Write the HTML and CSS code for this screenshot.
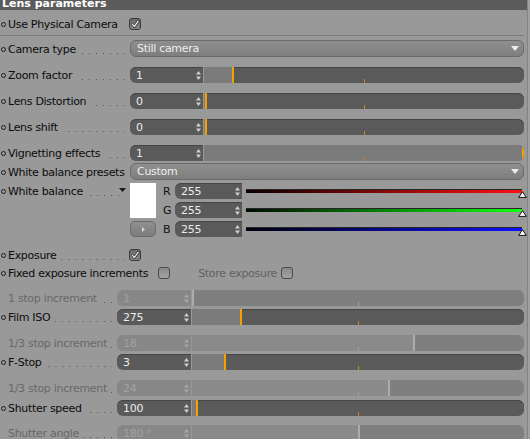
FILE: index.html
```html
<!DOCTYPE html>
<html>
<head>
<meta charset="utf-8">
<link rel="stylesheet" href="styles.css">
</head>
<body>
<div class="panel">
  <div class="header"><span>Lens parameters</span></div>
  <div class="rows">
    <div class="row r-phys">
      <div class="label"><i class="bullet"></i><span class="txt">Use Physical Camera</span></div>
      <span class="check on"><svg width="12" height="12" viewBox="0 0 12 12"><path d="M2.8 6.2 L5.2 9.2 L9.8 2.6" fill="none" stroke="#2e2e2e" stroke-width="3" stroke-linecap="round" stroke-linejoin="round"/><path d="M2.8 6.2 L5.2 9.2 L9.8 2.6" fill="none" stroke="#f4f4f4" stroke-width="1.4" stroke-linecap="round" stroke-linejoin="round"/></svg></span>
    </div>
    <div class="sep"></div>

    <div class="row r-cam">
      <div class="label"><i class="bullet"></i><span class="txt">Camera type</span><i class="lead"></i></div>
      <div class="dropdown"><span>Still camera</span><svg width="8" height="5" viewBox="0 0 8 5"><polygon points="0,0 8,0 4,5" fill="#ececec"/></svg></div>
    </div>

    <div class="row r-gap10">
      <div class="label"><i class="bullet"></i><span class="txt">Zoom factor</span><i class="lead"></i></div>
      <div class="ctrl">
        <div class="num"><span>1</span><svg class="spin" width="5" height="9" viewBox="0 0 5 9"><polygon points="0,3.5 2.5,0 5,3.5" fill="#cfcfcf"/><polygon points="0,5.5 2.5,9 5,5.5" fill="#cfcfcf"/></svg></div>
        <div class="slider"><div class="fill" style="width:30px"></div><i class="tick"></i></div>
      </div>
    </div>

    <div class="row r-gap10">
      <div class="label"><i class="bullet"></i><span class="txt">Lens Distortion</span><i class="lead"></i></div>
      <div class="ctrl">
        <div class="num"><span>0</span><svg class="spin" width="5" height="9" viewBox="0 0 5 9"><polygon points="0,3.5 2.5,0 5,3.5" fill="#cfcfcf"/><polygon points="0,5.5 2.5,9 5,5.5" fill="#cfcfcf"/></svg></div>
        <div class="slider"><div class="fill" style="width:3px"></div><i class="tick"></i></div>
      </div>
    </div>

    <div class="row r-gap10">
      <div class="label"><i class="bullet"></i><span class="txt">Lens shift</span><i class="lead"></i></div>
      <div class="ctrl">
        <div class="num"><span>0</span><svg class="spin" width="5" height="9" viewBox="0 0 5 9"><polygon points="0,3.5 2.5,0 5,3.5" fill="#cfcfcf"/><polygon points="0,5.5 2.5,9 5,5.5" fill="#cfcfcf"/></svg></div>
        <div class="slider"><div class="fill" style="width:3px"></div><i class="tick"></i></div>
      </div>
    </div>

    <div class="row r-gap10">
      <div class="label"><i class="bullet"></i><span class="txt">Vignetting effects</span><i class="lead"></i></div>
      <div class="ctrl">
        <div class="num"><span>1</span><svg class="spin" width="5" height="9" viewBox="0 0 5 9"><polygon points="0,3.5 2.5,0 5,3.5" fill="#cfcfcf"/><polygon points="0,5.5 2.5,9 5,5.5" fill="#cfcfcf"/></svg></div>
        <div class="slider"><div class="fill" style="width:100%"></div><i class="tick"></i></div>
      </div>
    </div>

    <div class="row r-wbp">
      <div class="label"><i class="bullet"></i><span class="txt">White balance presets</span></div>
      <div class="dropdown"><span>Custom</span><svg width="8" height="5" viewBox="0 0 8 5"><polygon points="0,0 8,0 4,5" fill="#ececec"/></svg></div>
    </div>

    <div class="row r-wb">
      <div class="label"><i class="bullet"></i><span class="txt">White balance</span><i class="lead"></i><svg class="tri" width="7" height="4" viewBox="0 0 7 4"><polygon points="0,0 7,0 3.5,4" fill="#1a1a1a"/></svg></div>
      <div class="swatchcol">
        <div class="swatch"></div>
        <div class="swbtn"><svg width="3" height="5" viewBox="0 0 3 5"><polygon points="0,0 3,2.5 0,5" fill="#d8d8d8"/></svg></div>
      </div>
      <div class="chs">
        <div class="ch">
          <span class="chl">R</span>
          <div class="num cnum"><span>255</span><svg class="spin" width="5" height="9" viewBox="0 0 5 9"><polygon points="0,3.5 2.5,0 5,3.5" fill="#cfcfcf"/><polygon points="0,5.5 2.5,9 5,5.5" fill="#cfcfcf"/></svg></div>
          <div class="cbar red"><svg class="mk" width="9" height="7" viewBox="0 0 9 7"><polygon points="4.5,0.7 8.3,6.4 0.7,6.4" fill="#fff" stroke="#111" stroke-width="1"/></svg></div>
        </div>
        <div class="ch">
          <span class="chl">G</span>
          <div class="num cnum"><span>255</span><svg class="spin" width="5" height="9" viewBox="0 0 5 9"><polygon points="0,3.5 2.5,0 5,3.5" fill="#cfcfcf"/><polygon points="0,5.5 2.5,9 5,5.5" fill="#cfcfcf"/></svg></div>
          <div class="cbar green"><svg class="mk" width="9" height="7" viewBox="0 0 9 7"><polygon points="4.5,0.7 8.3,6.4 0.7,6.4" fill="#fff" stroke="#111" stroke-width="1"/></svg></div>
        </div>
        <div class="ch">
          <span class="chl">B</span>
          <div class="num cnum"><span>255</span><svg class="spin" width="5" height="9" viewBox="0 0 5 9"><polygon points="0,3.5 2.5,0 5,3.5" fill="#cfcfcf"/><polygon points="0,5.5 2.5,9 5,5.5" fill="#cfcfcf"/></svg></div>
          <div class="cbar blue"><svg class="mk" width="9" height="7" viewBox="0 0 9 7"><polygon points="4.5,0.7 8.3,6.4 0.7,6.4" fill="#fff" stroke="#111" stroke-width="1"/></svg></div>
        </div>
      </div>
    </div>

    <div class="row r-exp">
      <div class="label"><i class="bullet"></i><span class="txt">Exposure</span><i class="lead"></i></div>
      <span class="check on"><svg width="12" height="12" viewBox="0 0 12 12"><path d="M2.8 6.2 L5.2 9.2 L9.8 2.6" fill="none" stroke="#2e2e2e" stroke-width="3" stroke-linecap="round" stroke-linejoin="round"/><path d="M2.8 6.2 L5.2 9.2 L9.8 2.6" fill="none" stroke="#f4f4f4" stroke-width="1.4" stroke-linecap="round" stroke-linejoin="round"/></svg></span>
    </div>

    <div class="row r-fixed">
      <div class="label auto"><i class="bullet"></i><span class="txt">Fixed exposure increments</span></div>
      <span class="check off first"></span>
      <span class="store">Store exposure</span>
      <span class="check off last"></span>
    </div>

    <div class="row lo dis g9">
      <div class="label"><span class="txt">1 stop increment</span><i class="lead"></i></div>
      <div class="ctrl">
        <div class="num"><span>1</span><svg class="spin" width="5" height="9" viewBox="0 0 5 9"><polygon points="0,3.5 2.5,0 5,3.5" fill="#a6a6a6"/><polygon points="0,5.5 2.5,9 5,5.5" fill="#a6a6a6"/></svg></div>
        <div class="slider"><div class="fill" style="width:2px"></div><i class="tick"></i></div>
      </div>
    </div>
    <div class="row lo g3">
      <div class="label"><i class="bullet"></i><span class="txt">Film ISO</span><i class="lead"></i></div>
      <div class="ctrl">
        <div class="num"><span>275</span><svg class="spin" width="5" height="9" viewBox="0 0 5 9"><polygon points="0,3.5 2.5,0 5,3.5" fill="#cfcfcf"/><polygon points="0,5.5 2.5,9 5,5.5" fill="#cfcfcf"/></svg></div>
        <div class="slider"><div class="fill" style="width:50px"></div><i class="tick"></i></div>
      </div>
    </div>

    <div class="row lo dis g10">
      <div class="label"><span class="txt">1/3 stop increment</span><i class="lead"></i></div>
      <div class="ctrl">
        <div class="num"><span>18</span><svg class="spin" width="5" height="9" viewBox="0 0 5 9"><polygon points="0,3.5 2.5,0 5,3.5" fill="#a6a6a6"/><polygon points="0,5.5 2.5,9 5,5.5" fill="#a6a6a6"/></svg></div>
        <div class="slider"><div class="fill" style="width:223px"></div><i class="tick"></i></div>
      </div>
    </div>
    <div class="row lo g3">
      <div class="label"><i class="bullet"></i><span class="txt">F-Stop</span><i class="lead"></i></div>
      <div class="ctrl">
        <div class="num"><span>3</span><svg class="spin" width="5" height="9" viewBox="0 0 5 9"><polygon points="0,3.5 2.5,0 5,3.5" fill="#cfcfcf"/><polygon points="0,5.5 2.5,9 5,5.5" fill="#cfcfcf"/></svg></div>
        <div class="slider"><div class="fill" style="width:34px"></div><i class="tick"></i></div>
      </div>
    </div>

    <div class="row lo dis g10">
      <div class="label"><span class="txt">1/3 stop increment</span><i class="lead"></i></div>
      <div class="ctrl">
        <div class="num"><span>24</span><svg class="spin" width="5" height="9" viewBox="0 0 5 9"><polygon points="0,3.5 2.5,0 5,3.5" fill="#a6a6a6"/><polygon points="0,5.5 2.5,9 5,5.5" fill="#a6a6a6"/></svg></div>
        <div class="slider"><div class="fill" style="width:198px"></div><i class="tick"></i></div>
      </div>
    </div>
    <div class="row lo g4">
      <div class="label"><i class="bullet"></i><span class="txt">Shutter speed</span><i class="lead"></i></div>
      <div class="ctrl">
        <div class="num"><span>100</span><svg class="spin" width="5" height="9" viewBox="0 0 5 9"><polygon points="0,3.5 2.5,0 5,3.5" fill="#cfcfcf"/><polygon points="0,5.5 2.5,9 5,5.5" fill="#cfcfcf"/></svg></div>
        <div class="slider"><div class="fill" style="width:6px"></div><i class="tick"></i></div>
      </div>
    </div>

    <div class="row lo dis g9">
      <div class="label"><span class="txt">Shutter angle</span><i class="lead"></i></div>
      <div class="ctrl">
        <div class="num"><span>180 °</span><svg class="spin" width="5" height="9" viewBox="0 0 5 9"><polygon points="0,3.5 2.5,0 5,3.5" fill="#a6a6a6"/><polygon points="0,5.5 2.5,9 5,5.5" fill="#a6a6a6"/></svg></div>
        <div class="slider"><div class="fill" style="width:168px"></div><i class="tick"></i></div>
      </div>
    </div>
  </div>
</div>
</body>
</html>
```

FILE: styles.css
```css
html, body {
  margin: 0;
  padding: 0;
}
body {
  width: 530px;
  height: 439px;
  overflow: hidden;
  background: #a1a1a1;
  font-family: "DejaVu Sans", "Liberation Sans", sans-serif;
  font-size: 11px;
  letter-spacing: -0.3px;
  color: #0c0c0c;
}
.panel {
  width: 527px;
  height: 439px;
  background: #999999;
  border-right: 1px solid #838383;
  overflow: hidden;
}
.header {
  height: 10px;
  background: #5b5b5b;
  color: #fff;
  font-weight: bold;
  font-size: 11px;
  letter-spacing: 0;
  line-height: 7px;
  padding-left: 2px;
  overflow: hidden;
  white-space: nowrap;
}
.rows {
  padding-right: 3px;
}
.row {
  display: flex;
  align-items: center;
  height: 16px;
}
.label {
  width: 125px;
  flex: none;
  height: 16px;
  display: flex;
  align-items: center;
  white-space: nowrap;
}
.label .txt {
  line-height: 16px;
  padding-top: 2px;
}
.label.auto {
  width: auto;
}
.bullet {
  width: 5px;
  height: 5px;
  border: 1px solid #1c1c1c;
  border-radius: 50%;
  box-sizing: border-box;
  margin: 1px 2px 0 1px;
  flex: none;
}
.dis .label .txt {
  padding-left: 8px;
  color: #686868;
}
.lead {
  flex: 1;
  align-self: flex-end;
  height: 1px;
  margin: 0 0 3px 4px;
  background-image: linear-gradient(to left, #555 1px, transparent 1px);
  background-size: 7px 1px;
  background-position: right bottom;
  background-repeat: repeat-x;
}
.tri {
  flex: none;
  margin: 0 -1px 2px 0;
}

/* checkbox */
.check {
  width: 12px;
  height: 12px;
  box-sizing: border-box;
  border: 1px solid #3a3a3a;
  border-radius: 3px;
  margin-left: 4px;
  flex: none;
  display: flex;
  align-items: center;
  justify-content: center;
}
.check svg {
  display: block;
}
.check.on {
  background: linear-gradient(#6a6a6a, #858585);
}
.check.off {
  background: linear-gradient(#8a8a8a, #a2a2a2);
  border-color: #4a4a4a;
}
.check.first {
  margin-left: 10px;
}
.check.last {
  margin-left: 4px;
}

.r-phys {
  margin-top: 6px;
}
.sep {
  height: 1px;
  margin-top: 3px;
  background: #7d7d7d;
}

/* dropdown */
.dropdown {
  flex: 1;
  margin-left: 5px;
  height: 17px;
  box-sizing: border-box;
  border: 1px solid #6a6a6a;
  border-radius: 6px;
  background: linear-gradient(#8f8f8f, #7e7e7e);
  color: #efefef;
  display: flex;
  align-items: center;
  justify-content: space-between;
  padding: 0 4px 0 6px;
  font-size: 11px;
}
.dropdown svg {
  display: block;
}
.r-cam {
  margin-top: 4px;
  height: 17px;
}
.r-gap10 {
  margin-top: 10px;
}
.r-wbp {
  margin-top: 2px;
  height: 17px;
}

/* number + slider */
.ctrl {
  flex: 1;
  margin-left: 5px;
  height: 16px;
  display: flex;
}
.num {
  width: 73px;
  flex: none;
  height: 16px;
  box-sizing: border-box;
  background: #5a5a5a;
  box-shadow: inset 0 1px 0 #464646;
  border-radius: 6px 0 0 6px;
  color: #ececec;
  display: flex;
  align-items: center;
  justify-content: space-between;
  padding: 0 2px 0 6px;
  white-space: nowrap;
}
.spin {
  display: block;
  flex: none;
}
.slider {
  flex: 1;
  margin-left: 1px;
  height: 16px;
  background: #5a5a5a;
  box-shadow: inset 0 1px 0 #464646;
  border-radius: 0 6px 6px 0;
  position: relative;
  overflow: hidden;
}
.fill {
  position: absolute;
  left: 0;
  top: 0;
  bottom: 0;
  box-sizing: border-box;
  background: #7b7b7b;
  border-right: 2px solid #f5a200;
}
.tick {
  position: absolute;
  left: 50%;
  bottom: 0;
  width: 1px;
  height: 4px;
  background: #c48a22;
}

/* lower section */
.lo .label {
  width: 112px;
}
.lo .num {
  width: 74px;
}
.dis .num {
  background: #878787;
  box-shadow: none;
  color: #a3a3a3;
}
.dis .slider {
  background: #7f7f7f;
  box-shadow: none;
}
.dis .fill {
  background: #8a8a8a;
  border-right-color: #acacac;
}
.dis .tick {
  background: #a0a0a0;
}
.g9 { margin-top: 9px; }
.g3 { margin-top: 3px; }
.g4 { margin-top: 4px; }
.g10 { margin-top: 10px; }

/* white balance */
.r-wb {
  margin-top: 3px;
  height: 54px;
  align-items: flex-start;
}
.swatchcol {
  width: 26px;
  margin-left: 5px;
  flex: none;
  display: flex;
  flex-direction: column;
}
.swatch {
  height: 35px;
  background: #ffffff;
}
.swbtn {
  margin-top: 3px;
  height: 16px;
  box-sizing: border-box;
  border: 1px solid #6a6a6a;
  border-radius: 5px;
  background: linear-gradient(#909090, #7c7c7c);
  display: flex;
  align-items: center;
  justify-content: center;
}
.swbtn svg {
  display: block;
}
.chs {
  flex: 1;
  display: flex;
  flex-direction: column;
  gap: 3px;
}
.ch {
  display: flex;
  align-items: center;
  height: 16px;
}
.chl {
  width: 12px;
  margin-left: 7px;
  flex: none;
  color: #111;
}
.cnum {
  width: 67px;
}
.cbar {
  flex: 1;
  margin: 0 2px 0 4px;
  height: 4px;
  box-sizing: border-box;
  border-top: 1px solid #262626;
  position: relative;
}
.cbar.red { background: linear-gradient(to right, #0a0000, #ff1010); }
.cbar.green { background: linear-gradient(to right, #000a00, #10ff10); }
.cbar.blue { background: linear-gradient(to right, #00000a, #1010ff); }
.mk {
  position: absolute;
  right: -5px;
  top: 1px;
  display: block;
}

/* exposure */
.r-exp {
  margin-top: 10px;
}
.r-fixed {
  margin-top: 2px;
}
.store {
  margin-left: 28px;
  color: #626262;
  white-space: nowrap;
}
```
